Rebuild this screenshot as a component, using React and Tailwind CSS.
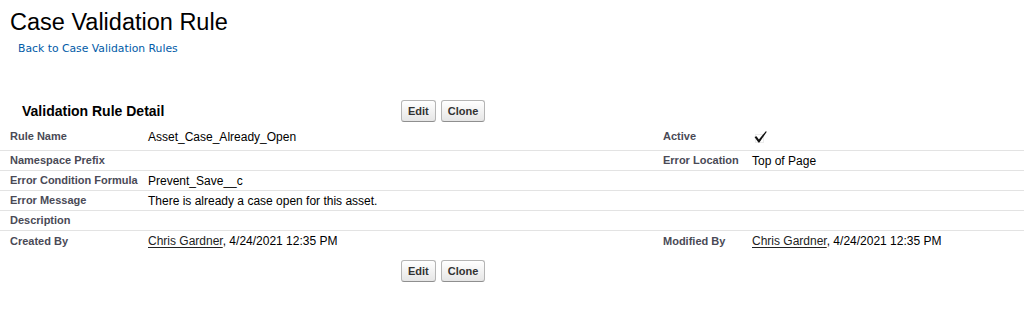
import { Fragment } from 'react';

const rows = [
  { left: 'Rule Name', leftValue: 'Asset_Case_Already_Open', right: 'Active', rightValue: 'check', tall: true },
  { left: 'Namespace Prefix', leftValue: '', right: 'Error Location', rightValue: 'Top of Page' },
  { left: 'Error Condition Formula', leftValue: 'Prevent_Save__c', right: '', rightValue: '' },
  { left: 'Error Message', leftValue: 'There is already a case open for this asset.', right: '', rightValue: '' },
  { left: 'Description', leftValue: '', right: '', rightValue: '' },
  { left: 'Created By', leftValue: 'user', right: 'Modified By', rightValue: 'user', last: true },
];

function Button({ children }) {
  return (
    <button
      type="button"
      className="h-[22px] rounded-[3px] border border-[#b5b5b5] border-b-[#8f8f8f] bg-gradient-to-b from-white to-[#e6e6e6] px-[6px] text-[11px] font-bold text-[#333]"
    >
      {children}
    </button>
  );
}

function ButtonRow() {
  return (
    <div className="flex gap-[5px]">
      <Button>Edit</Button>
      <Button>Clone</Button>
    </div>
  );
}

function CheckMark() {
  return (
    <svg width="18" height="14" viewBox="0 0 18 14">
      <rect x="3.5" y="4.5" width="8" height="8" fill="none" stroke="#d8d8d8" strokeDasharray="1 1" />
      <path d="M2.5 7 L4.5 6.2 L6.9 9.4 L13.8 1.2 L14.8 1.8 L7.4 12.4 L6.4 12.4 Z" fill="#111" />
    </svg>
  );
}

function UserStamp() {
  return (
    <span>
      <span className="text-[#222] underline underline-offset-2">Chris Gardner</span>, 4/24/2021 12:35 PM
    </span>
  );
}

function Value({ value }) {
  if (value === 'check') return <CheckMark />;
  if (value === 'user') return <UserStamp />;
  return value;
}

function cellClass(row) {
  const size = row.tall ? 'h-[25px] items-start pt-[4px]' : 'h-[20px] items-center';
  const line = row.last ? '' : 'border-b border-[#e3e3e3]';
  return `${size} ${line} flex`;
}

export default function App() {
  return (
    <div className="h-[331px] w-[1024px] bg-white font-['Liberation_Sans',Arial,sans-serif] text-black">
      <h1 className="pl-[10px] pt-[8px] text-[23.5px] leading-[29px]">Case Validation Rule</h1>
      <a href="#" className="mt-[5px] block pl-[18px] font-['DejaVu_Sans',Verdana,sans-serif] text-[10.8px] leading-[14px] text-[#015ba7]">
        Back to Case Validation Rules
      </a>

      <div className="mt-[40px] flex h-[30px] items-center">
        <h2 className="w-[401px] pl-[22px] text-[14px] font-bold">Validation Rule Detail</h2>
        <ButtonRow />
      </div>

      <div className="grid grid-cols-[148px_515px_89px_1fr]">
        {rows.map((row) => (
          <Fragment key={row.left}>
            <div className={`${cellClass(row)} pl-[10px] text-[11px] leading-[13px] font-bold text-[#4a4a56]`}>
              {row.left}
            </div>
            <div className={`${cellClass(row)} text-[12px] leading-[14px]`}>
              <Value value={row.leftValue} />
            </div>
            <div className={`${cellClass(row)} text-[11px] leading-[13px] font-bold text-[#4a4a56]`}>
              {row.right}
            </div>
            <div className={`${cellClass(row)} text-[12px] leading-[14px]`}>
              <Value value={row.rightValue} />
            </div>
          </Fragment>
        ))}
      </div>

      <div className="mt-[9px] pl-[401px]">
        <ButtonRow />
      </div>
    </div>
  );
}
